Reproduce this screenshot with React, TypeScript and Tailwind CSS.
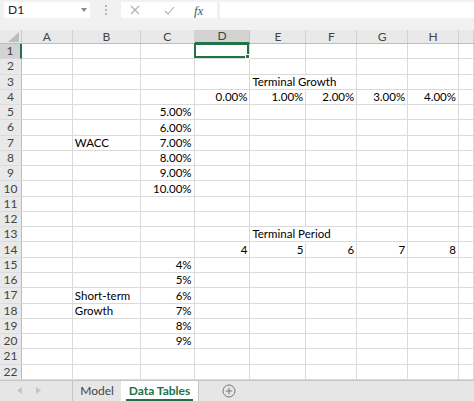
const font = { fontFamily: 'Lato, "Open Sans", sans-serif' }

const cols = [
    { key: 'A', w: 'w-[51px]' },
    { key: 'B', w: 'w-[68px]' },
    { key: 'C', w: 'w-[54px]' },
    { key: 'D', w: 'w-[56px]' },
    { key: 'E', w: 'w-[56px]' },
    { key: 'F', w: 'w-[51px]' },
    { key: 'G', w: 'w-[51px]' },
    { key: 'H', w: 'w-[51px]' },
    { key: 'I', w: 'w-[15px]' },
]

type Cell = { text: string; right?: boolean; spill?: boolean }

const data: Record<string, Cell> = {
    E3: { text: 'Terminal Growth', spill: true },
    D4: { text: '0.00%', right: true },
    E4: { text: '1.00%', right: true },
    F4: { text: '2.00%', right: true },
    G4: { text: '3.00%', right: true },
    H4: { text: '4.00%', right: true },
    C5: { text: '5.00%', right: true },
    C6: { text: '6.00%', right: true },
    C7: { text: '7.00%', right: true },
    B7: { text: 'WACC' },
    C8: { text: '8.00%', right: true },
    C9: { text: '9.00%', right: true },
    C10: { text: '10.00%', right: true },
    E13: { text: 'Terminal Period', spill: true },
    D14: { text: '4', right: true },
    E14: { text: '5', right: true },
    F14: { text: '6', right: true },
    G14: { text: '7', right: true },
    H14: { text: '8', right: true },
    C15: { text: '4%', right: true },
    C16: { text: '5%', right: true },
    C17: { text: '6%', right: true },
    B17: { text: 'Short-term' },
    C18: { text: '7%', right: true },
    B18: { text: 'Growth' },
    C19: { text: '8%', right: true },
    C20: { text: '9%', right: true },
}

const rows = Array.from({ length: 22 }, (_, i) => i + 1)

function FormulaBar() {
    return (
        <div className="flex h-[30px] bg-[#f1f1f1] pt-[2px]">
            <div className="ml-[4px] flex h-[16px] w-[86px] items-center justify-between bg-white pl-[4px] pr-[3px] text-[12px] text-[#222]">
                <span>D1</span>
                <svg width="6" height="4" viewBox="0 0 6 4">
                    <path d="M0 0 L6 0 L3 4 Z" fill="#8a8a8a" />
                </svg>
            </div>
            <div className="flex w-[31px] items-start justify-center pt-[3px]">
                <div className="flex flex-col gap-[2px]">
                    <span className="h-[2px] w-[2px] bg-[#b5b5b5]" />
                    <span className="h-[2px] w-[2px] bg-[#b5b5b5]" />
                    <span className="h-[2px] w-[2px] bg-[#b5b5b5]" />
                </div>
            </div>
            <div className="flex h-[16px] w-[96px] items-center bg-white">
                <svg className="ml-[9px]" width="10" height="10" viewBox="0 0 10 10">
                    <path d="M1 1 L9 9 M9 1 L1 9" stroke="#b0b0b0" strokeWidth="1.1" />
                </svg>
                <svg className="ml-[24px]" width="11" height="9" viewBox="0 0 11 9">
                    <path d="M1 5 L4 8 L10 1" stroke="#b0b0b0" strokeWidth="1.1" fill="none" />
                </svg>
                <span
                    className="ml-[19px] text-[13px] italic leading-none text-[#555]"
                    style={{ fontFamily: '"Liberation Serif", serif' }}
                >
                    fx
                </span>
            </div>
            <div className="ml-[3px] h-[16px] flex-1 bg-white" />
        </div>
    )
}

function HeaderRow() {
    return (
        <div className="flex h-[14px] border-b border-[#bcbcbc] bg-[#e9e9e9] text-[12px] text-[#444]">
            <div className="relative w-[22px] border-r border-[#c8c8c8]">
                <svg className="absolute bottom-[1px] right-[2px]" width="11" height="10" viewBox="0 0 11 10">
                    <path d="M11 0 L11 10 L0 10 Z" fill="#bdbdbd" />
                </svg>
            </div>
            {cols.map((c) =>
                c.key === 'D' ? (
                    <div
                        key={c.key}
                        className={`${c.w} -mb-[1px] flex items-center justify-center border-b-2 border-r border-b-[#217346] border-r-[#c8c8c8] bg-[#d3d3d3] leading-none`}
                    >
                        {c.key}
                    </div>
                ) : (
                    <div key={c.key} className={`${c.w} flex items-center justify-center border-r border-[#d2d2d2] leading-none`}>
                        {c.key === 'I' ? '' : c.key}
                    </div>
                ),
            )}
        </div>
    )
}

function GridRow({ r }: { r: number }) {
    return (
        <div className="flex h-[15.27px]">
            <div
                className={`flex w-[22px] items-center justify-center border-b text-[12px] leading-none text-[#444] ${
                    r === 1
                        ? 'border-r-2 border-b-[#d6d6d6] border-r-[#217346] bg-[#d3d3d3]'
                        : 'border-r border-b-[#dcdcdc] border-r-[#bcbcbc] bg-[#e9e9e9]'
                }`}
            >
                {r}
            </div>
            {cols.map((c) => {
                const cell = data[`${c.key}${r}`]
                const selected = c.key === 'D' && r === 1
                return (
                    <div
                        key={c.key}
                        className={`${c.w} relative flex items-end border-b border-[#dadada] text-[11.5px] leading-[13px] text-black ${
                            cell?.spill ? 'border-r-transparent' : ''
                        } border-r ${cell?.right ? 'justify-end pr-[2px]' : 'pl-[2px]'}`}
                    >
                        {cell && <span className="whitespace-nowrap pb-[1px]">{cell.text}</span>}
                        {selected && (
                            <div className="absolute -left-[1px] -top-[1px] h-[calc(100%+1px)] w-[calc(100%+1px)] border-2 border-[#217346]">
                                <span className="absolute -bottom-[3px] -right-[3px] h-[5px] w-[5px] border border-white bg-[#217346]" />
                            </div>
                        )}
                    </div>
                )
            })}
        </div>
    )
}

function TabBar() {
    return (
        <div className="flex h-[21px] border-t border-[#c6c6c6] bg-[#e6e6e6] text-[12px]">
            <div className="flex w-[72px] items-center gap-[14px] pl-[17px]">
                <svg width="5" height="7" viewBox="0 0 5 7">
                    <path d="M5 0 L0 3.5 L5 7 Z" fill="#c4c4c4" />
                </svg>
                <svg width="5" height="7" viewBox="0 0 5 7">
                    <path d="M0 0 L5 3.5 L0 7 Z" fill="#c4c4c4" />
                </svg>
            </div>
            <div className="flex w-[49px] items-center justify-center border-l border-[#c6c6c6] text-[#444]">Model</div>
            <div className="relative flex w-[77px] items-center justify-center bg-white font-bold text-[#217346]">
                Data Tables
                <span className="absolute bottom-0 left-[5px] right-[5px] h-[2px] bg-[#217346]" />
            </div>
            <div className="flex w-[60px] items-center justify-center border-l border-[#c6c6c6]">
                <svg width="14" height="14" viewBox="0 0 14 14">
                    <circle cx="7" cy="7" r="6" fill="none" stroke="#777" strokeWidth="1" />
                    <path d="M7 3.8 V10.2 M3.8 7 H10.2" stroke="#777" strokeWidth="1" />
                </svg>
            </div>
            <div className="flex-1" />
        </div>
    )
}

export default function App() {
    return (
        <div className="h-[401px] w-[474px] overflow-hidden bg-white" style={font}>
            <FormulaBar />
            <HeaderRow />
            <div className="bg-white">
                {rows.map((r) => (
                    <GridRow key={r} r={r} />
                ))}
            </div>
            <TabBar />
        </div>
    )
}
